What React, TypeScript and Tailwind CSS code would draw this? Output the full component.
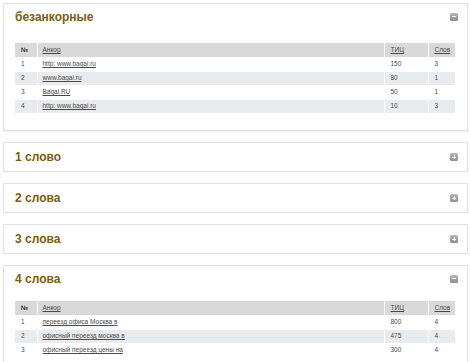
import React from "react";

type Row = { n: number; a: string; t: number; s: number };

const rows1: Row[] = [
  { n: 1, a: "http: www.bagai.ru", t: 150, s: 3 },
  { n: 2, a: "www.bagai.ru", t: 80, s: 1 },
  { n: 3, a: "Bagai.RU", t: 50, s: 1 },
  { n: 4, a: "http: www.bagai.ru", t: 10, s: 3 },
];

const rows5: Row[] = [
  { n: 1, a: "переезд офиса Москва в", t: 800, s: 4 },
  { n: 2, a: "офисный переезд москва в", t: 475, s: 4 },
  { n: 3, a: "офисный переезд цены на", t: 300, s: 4 },
];

function Toggle({ open }: { open: boolean }) {
  return (
    <div className="w-[8px] h-[8px] rounded-[1.5px] bg-gradient-to-b from-[#b8b8b8] to-[#8e8e8e] flex items-center justify-center mr-[-2px]">
      {open ? (
        <div className="w-[4px] h-[1px] bg-white" />
      ) : (
        <div className="relative w-[4px] h-[4px]">
          <div className="absolute left-0 top-[1.5px] w-[4px] h-[1px] bg-white" />
          <div className="absolute top-0 left-[1.5px] w-[1px] h-[4px] bg-white" />
        </div>
      )}
    </div>
  );
}

function Title({ text, open }: { text: string; open: boolean }) {
  return (
    <div className={`flex items-center justify-between ${open ? "h-[25px]" : "h-[28px]"}`}>
      <span className="text-[12px] font-bold text-[#7d5c0c] leading-none">{text}</span>
      <Toggle open={open} />
    </div>
  );
}

function Table({ rows }: { rows: Row[] }) {
  return (
    <table className="w-[440px] border-collapse text-[6.5px] text-[#4a4a4a] table-fixed">
      <colgroup>
        <col className="w-[22px]" />
        <col className="w-[347px]" />
        <col className="w-[44px]" />
        <col className="w-[27px]" />
      </colgroup>
      <thead>
        <tr className="h-[14px] bg-[#d9d9d9]">
          <th className="text-left font-bold pl-[6px] border-r border-white text-[#333]">№</th>
          <th className="text-left font-normal pl-[5px] border-r border-white"><span className="underline">Анкор</span></th>
          <th className="text-left font-normal pl-[6px] border-r border-white"><span className="underline">ТИЦ</span></th>
          <th className="text-left font-normal pl-[6px]"><span className="underline">Слов</span></th>
        </tr>
      </thead>
      <tbody>
        {rows.map((r, i) => (
          <tr key={r.n} className={`h-[14px] ${i % 2 === 1 ? "bg-[#e9ecee]" : "bg-white"} border-t border-white`}>
            <td className="pl-[6px] border-r border-white">{r.n}</td>
            <td className="pl-[5px] border-r border-white"><span className="underline">{r.a}</span></td>
            <td className="pl-[6px] border-r border-white">{r.t}</td>
            <td className="pl-[6px]">{r.s}</td>
          </tr>
        ))}
      </tbody>
    </table>
  );
}

export default function App() {
  return (
    <div
      className="w-[470px] h-[362px] overflow-hidden bg-white pt-[3px] pl-[3px] flex flex-col gap-[11px]"
      style={{ fontFamily: '"Liberation Sans", Arial, sans-serif' }}
    >
      <div className="w-[465px] border border-[#e2e2e2] shadow-[0_1px_1px_rgba(0,0,0,0.05)] px-[11px] pb-[17px] shrink-0">
        <Title text="безанкорные" open />
        <div className="mt-[14px]">
          <Table rows={rows1} />
        </div>
      </div>
      {["1 слово", "2 слова", "3 слова"].map((t) => (
        <div key={t} className="w-[465px] border border-[#e2e2e2] px-[11px] shrink-0">
          <Title text={t} open={false} />
        </div>
      ))}
      <div className="w-[465px] border border-[#e2e2e2] px-[11px] pb-[17px] shrink-0">
        <Title text="4 слова" open />
        <div className="mt-[10px]">
          <Table rows={rows5} />
        </div>
      </div>
    </div>
  );
}
